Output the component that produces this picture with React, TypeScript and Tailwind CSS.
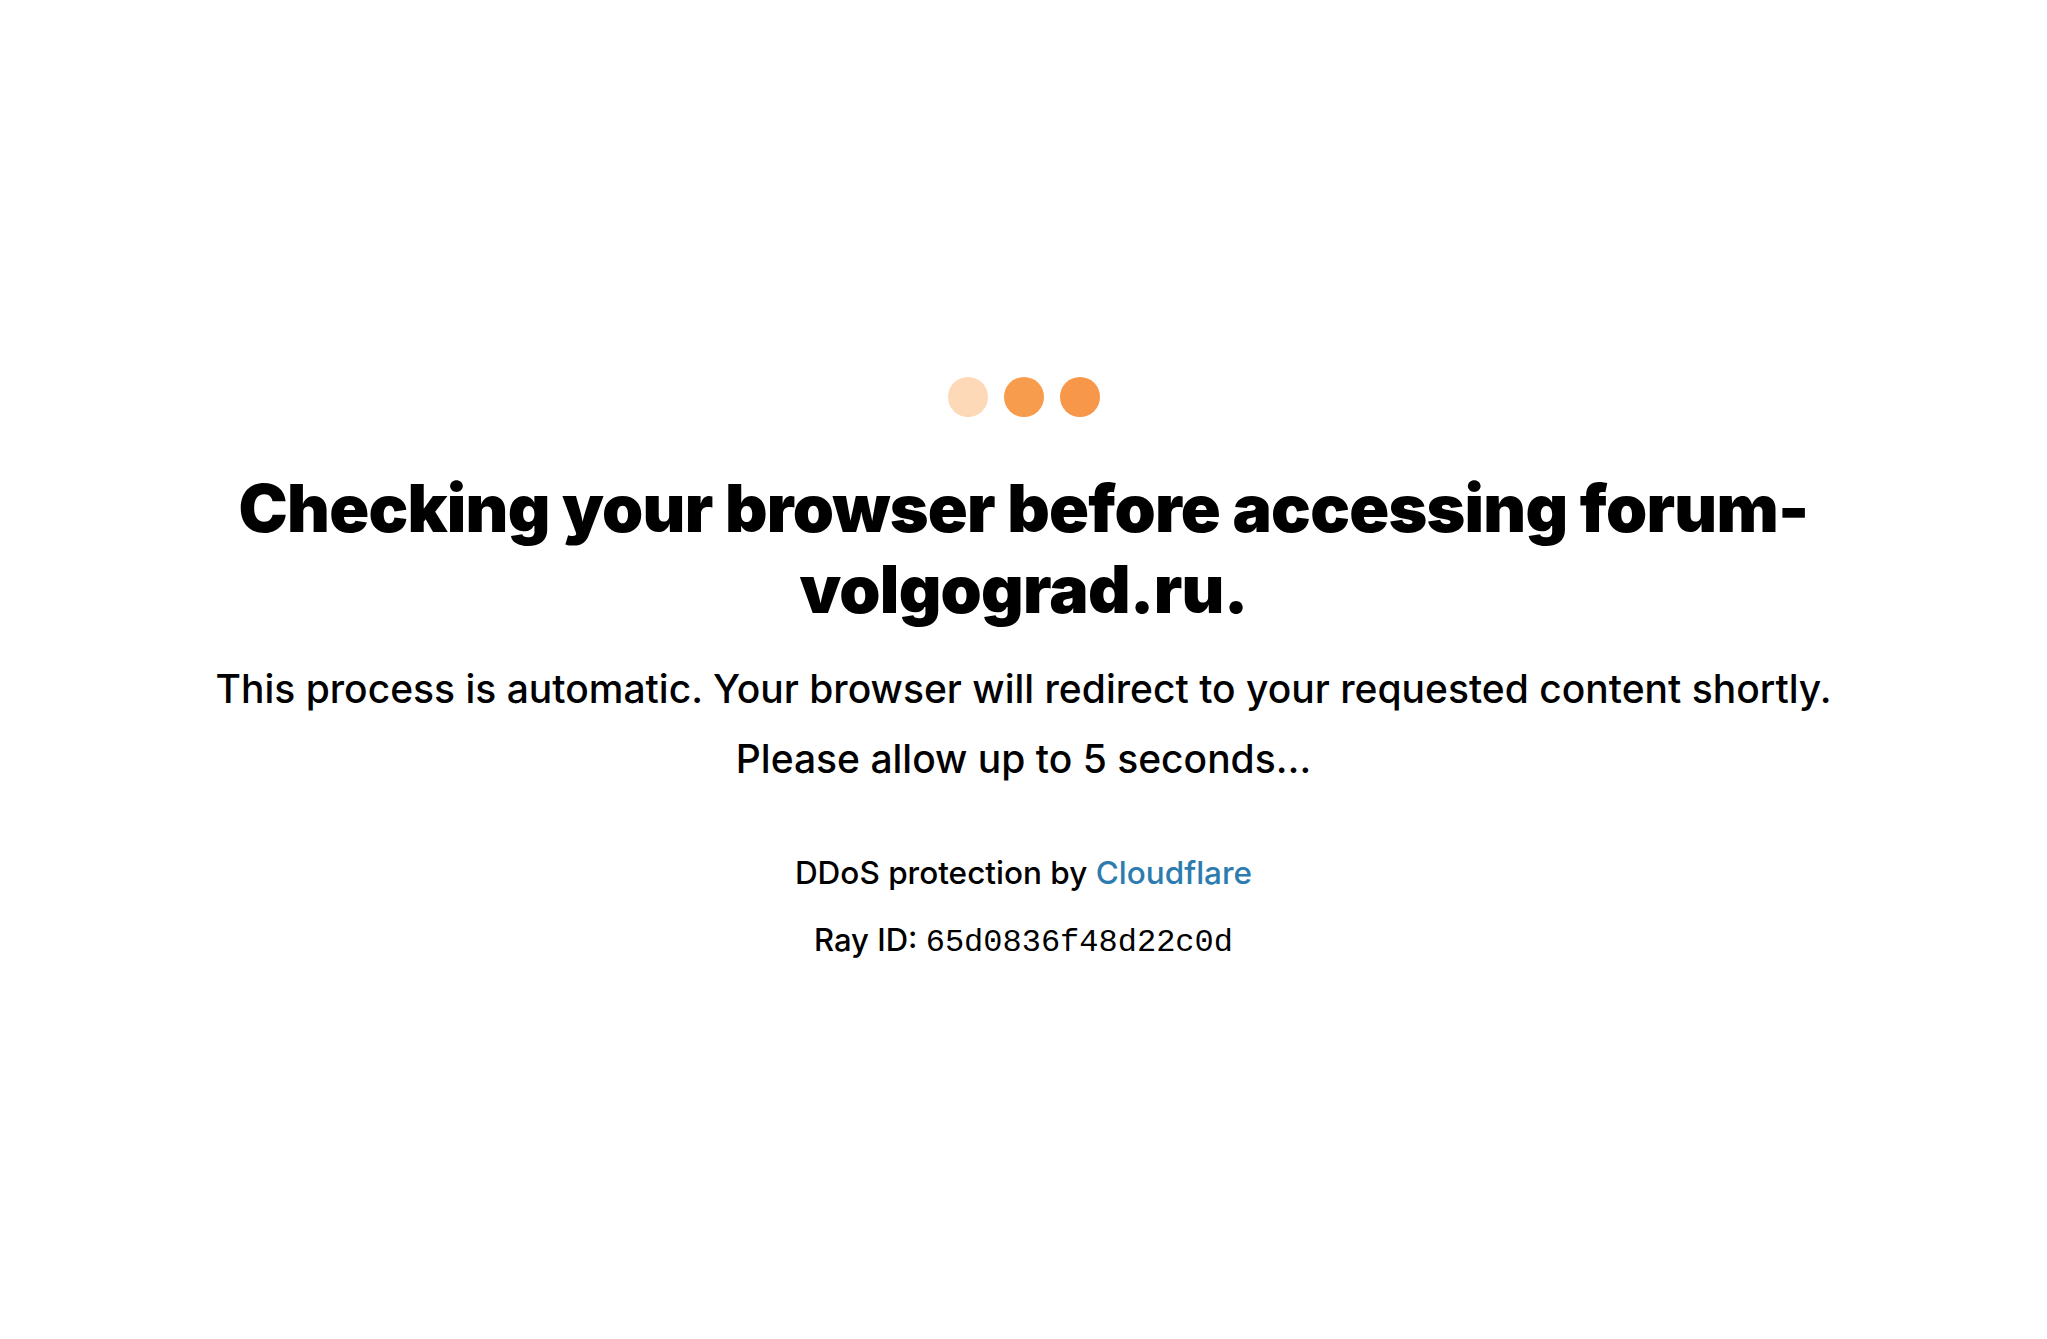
const dots = ['bg-[#fdd9b8]', 'bg-[#f79b4c]', 'bg-[#f6974a]']

export default function App() {
  return (
    <div className="min-h-screen bg-white font-['Inter','Liberation_Sans',sans-serif] text-black">
      <div className="flex flex-col items-center pt-[377px] text-center">
        {/* loader */}
        <div className="flex gap-4">
          {dots.map((c, i) => (
            <span key={i} className={`block h-10 w-10 rounded-full ${c}`} />
          ))}
        </div>

        <h1 className="mt-[51px] w-[1600px] text-[66px] font-black leading-[81px] tracking-[-0.75px]">
          Checking your browser before accessing forum-volgograd.ru.
        </h1>

        <p className="mt-6 text-[39px] font-medium leading-[70px]">
          This process is automatic. Your browser will redirect to your requested content shortly.
        </p>
        <p className="text-[39px] font-medium leading-[70px]">Please allow up to 5 seconds…</p>

        <div className="mt-[45px] text-[31.5px] font-medium leading-[67px]">
          DDoS protection by <a className="text-[#2c7cb0]">Cloudflare</a>
        </div>
        <div className="text-[31px] font-medium leading-[67px]">
          Ray ID: <code className="font-['Liberation_Mono',monospace] text-[32px] font-normal">65d0836f48d22c0d</code>
        </div>
      </div>
    </div>
  )
}
